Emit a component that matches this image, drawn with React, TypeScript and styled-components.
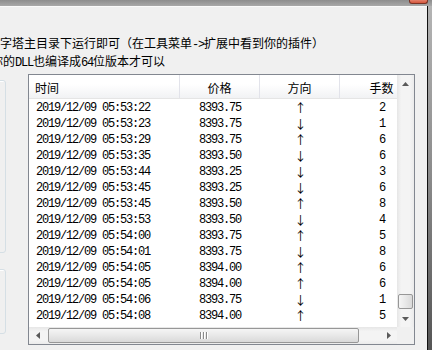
import React from "react";
import styled, { createGlobalStyle } from "styled-components";

const CJK = `"Noto Sans CJK SC", "Noto Sans CJK JP", sans-serif`;
const MONO = `"Liberation Mono", "DejaVu Sans Mono", monospace`;

const GlobalStyle = createGlobalStyle`
  html, body {
    margin: 0;
    padding: 0;
    width: 432px;
    height: 350px;
    overflow: hidden;
    background: #f0f0f0;
  }
`;

const trades = [
  ["2019/12/09 05:53:22", "8393.75", "up", "2"],
  ["2019/12/09 05:53:23", "8393.75", "down", "1"],
  ["2019/12/09 05:53:29", "8393.75", "up", "6"],
  ["2019/12/09 05:53:35", "8393.50", "down", "6"],
  ["2019/12/09 05:53:44", "8393.25", "down", "3"],
  ["2019/12/09 05:53:45", "8393.25", "down", "6"],
  ["2019/12/09 05:53:45", "8393.50", "up", "8"],
  ["2019/12/09 05:53:53", "8393.50", "down", "4"],
  ["2019/12/09 05:54:00", "8393.75", "up", "5"],
  ["2019/12/09 05:54:01", "8393.75", "down", "8"],
  ["2019/12/09 05:54:05", "8394.00", "up", "6"],
  ["2019/12/09 05:54:05", "8394.00", "up", "6"],
  ["2019/12/09 05:54:06", "8393.75", "down", "1"],
  ["2019/12/09 05:54:08", "8394.00", "up", "5"],
];

function App() {
  return (
    <Page>
      <GlobalStyle />
      <TitleStrip>
        <CloseButton />
      </TitleStrip>
      <Body>
        <Client>
          <Notes>
            <NoteLine $indent={0}>
              字塔主目录下运行即可（在工具菜单<Half>-&gt;</Half>扩展中看到你的插件）
            </NoteLine>
            <NoteLine $indent={-9}>
              你的<Half>DLL</Half>也编译成<Half>64</Half>位版本才可以
            </NoteLine>
          </Notes>

          <Lower>
            <GroupColumn>
              <GroupBox $height={173} $width={26} />
              <GroupBox $height={65} $width={25} />
            </GroupColumn>

            <ListView>
              <ListMain>
                <Grid>
                  <HeaderRow>
                    <HeaderCell $align="left">时间</HeaderCell>
                    <HeaderCell $align="center">价格</HeaderCell>
                    <HeaderCell $align="center">方向</HeaderCell>
                    <HeaderCell $align="center">手数</HeaderCell>
                  </HeaderRow>
                  <Rows>
                    {trades.map(([time, price, dir, qty], i) => (
                      <Row key={i}>
                        <Cell $align="left">{time}</Cell>
                        <Cell $align="center">{price}</Cell>
                        <ArrowCell>{dir === "up" ? "↑" : "↓"}</ArrowCell>
                        <Cell $align="center">{qty}</Cell>
                      </Row>
                    ))}
                  </Rows>
                </Grid>

                <VScroll>
                  <ScrollButton>
                    <svg width="7" height="4" viewBox="0 0 7 4">
                      <polygon points="0,4 3.5,0 7,4" fill="#5a5a5a" />
                    </svg>
                  </ScrollButton>
                  <VTrack>
                    <VThumb />
                  </VTrack>
                  <ScrollButton>
                    <svg width="7" height="4" viewBox="0 0 7 4">
                      <polygon points="0,0 7,0 3.5,4" fill="#5a5a5a" />
                    </svg>
                  </ScrollButton>
                </VScroll>
              </ListMain>

              <HScrollRow>
                <HScroll>
                  <ScrollButton>
                    <svg width="4" height="7" viewBox="0 0 4 7">
                      <polygon points="4,0 4,7 0,3.5" fill="#5a5a5a" />
                    </svg>
                  </ScrollButton>
                  <HTrack>
                    <HThumb style={{ width: 311 }}>
                      <Grip>
                        <span />
                        <span />
                        <span />
                      </Grip>
                    </HThumb>
                  </HTrack>
                  <ScrollButton>
                    <svg width="4" height="7" viewBox="0 0 4 7">
                      <polygon points="0,0 4,3.5 0,7" fill="#5a5a5a" />
                    </svg>
                  </ScrollButton>
                </HScroll>
                <Corner />
              </HScrollRow>
            </ListView>
          </Lower>
        </Client>
        <Frame />
      </Body>
    </Page>
  );
}

export default App;

const Page = styled.div`
  width: 432px;
  height: 350px;
  display: flex;
  flex-direction: column;
  overflow: hidden;
  background: #f0f0f0;
`;

const TitleStrip = styled.div`
  height: 6px;
  flex: none;
  display: flex;
  justify-content: flex-end;
  align-items: flex-start;
  padding-right: 4px;
  background: linear-gradient(#8d8d8d, #a8a8a8);
`;

const CloseButton = styled.div`
  width: 19px;
  height: 4px;
  box-sizing: border-box;
  border: 1px solid #7a3224;
  border-top: none;
  border-radius: 0 0 3px 3px;
  background: linear-gradient(#e4806a, #d5563c);
`;

const Body = styled.div`
  flex: 1;
  display: flex;
  min-height: 0;
`;

const Client = styled.div`
  flex: 1;
  display: flex;
  flex-direction: column;
  padding-top: 28px;
  border-top: 1px solid #fafafa;
  box-sizing: border-box;
  background: #f0f0f0;
  overflow: hidden;
`;

const Frame = styled.div`
  width: 4px;
  border-left: 1px solid #111;
  background: linear-gradient(#b4b4b4, #8a8a8a 50%, #555 100%);
`;

const Notes = styled.div`
  font-family: ${CJK};
  font-size: 12px;
  line-height: 15px;
  color: #000;
  white-space: nowrap;
`;

const NoteLine = styled.div<{ $indent: number }>`
  margin-left: ${(p) => p.$indent}px;
`;

const Half = styled.span`
  font-family: ${MONO};
  letter-spacing: -1.2px;
`;

const Lower = styled.div`
  display: flex;
  margin-top: 3px;
  gap: 22px;
`;

const GroupColumn = styled.div`
  width: 6px;
  display: flex;
  flex-direction: column;
  gap: 16px;
  padding-top: 6px;
`;

const GroupBox = styled.div<{ $height: number; $width: number }>`
  height: ${(p) => p.$height}px;
  width: ${(p) => p.$width}px;
  margin-left: ${(p) => 6 - p.$width}px;
  box-sizing: border-box;
  border: 1px solid #d5dfe5;
  border-radius: 3px;
  box-shadow: inset 1px 1px 0 #fff;
`;

const ListView = styled.div`
  width: 387px;
  height: 271px;
  box-sizing: border-box;
  border: 1px solid #828790;
  background: #fff;
  display: flex;
  flex-direction: column;
`;

const ListMain = styled.div`
  flex: 1;
  display: flex;
  min-height: 0;
`;

const Grid = styled.div`
  flex: 1;
  overflow: hidden;
  display: flex;
  flex-direction: column;
`;

const columns = `151px 80px 80px 84px`;

const HeaderRow = styled.div`
  display: grid;
  grid-template-columns: ${columns};
  height: 24px;
  box-sizing: border-box;
  border-bottom: 1px solid #e5e5e5;
  background: linear-gradient(#ffffff 0%, #ffffff 40%, #f1f2f4 100%);
`;

const HeaderCell = styled.div<{ $align: "left" | "center" }>`
  font-family: ${CJK};
  font-size: 12px;
  color: #000;
  display: flex;
  align-items: center;
  justify-content: ${(p) => (p.$align === "left" ? "flex-start" : "center")};
  padding: 2px 0 0 ${(p) => (p.$align === "left" ? "6px" : "0")};
  border-right: 1px solid #e2e3ea;
  white-space: nowrap;
`;

const Rows = styled.div`
  padding-top: 1px;
`;

const Row = styled.div`
  display: grid;
  grid-template-columns: ${columns};
  height: 16px;
`;

const Cell = styled.div<{ $align: "left" | "center" }>`
  font-family: ${MONO};
  font-size: 12px;
  letter-spacing: -1.2px;
  line-height: 16px;
  color: #000;
  text-align: ${(p) => p.$align};
  padding-left: ${(p) => (p.$align === "left" ? "7px" : "0")};
  white-space: nowrap;
`;

const ArrowCell = styled.div`
  font-family: ${CJK};
  font-size: 12px;
  line-height: 16px;
  color: #000;
  text-align: center;
  padding-left: 1px;
`;

const VScroll = styled.div`
  width: 17px;
  display: flex;
  flex-direction: column;
  background: linear-gradient(to right, #e6e6e6, #f4f4f4 25%, #f4f4f4 75%, #ebebeb);
`;

const ScrollButton = styled.div`
  width: 17px;
  height: 17px;
  flex: none;
  display: flex;
  align-items: center;
  justify-content: center;
`;

const VTrack = styled.div`
  flex: 1;
  display: flex;
  flex-direction: column;
  justify-content: flex-end;
  align-items: center;
  padding-bottom: 1px;
`;

const VThumb = styled.div`
  width: 15px;
  height: 15px;
  box-sizing: border-box;
  border: 1px solid #979797;
  border-radius: 2px;
  background: linear-gradient(to right, #f5f5f5, #e8e8e8 50%, #d9d9d9);
`;

const HScrollRow = styled.div`
  height: 17px;
  display: flex;
`;

const HScroll = styled.div`
  flex: 1;
  display: flex;
  background: linear-gradient(#e6e6e6, #f4f4f4 25%, #f4f4f4 75%, #ebebeb);
`;

const HTrack = styled.div`
  flex: 1;
  display: flex;
  align-items: center;
  padding-left: 2px;
`;

const HThumb = styled.div`
  height: 15px;
  box-sizing: border-box;
  border: 1px solid #979797;
  border-radius: 2px;
  background: linear-gradient(#f5f5f5, #e8e8e8 50%, #d9d9d9);
  display: flex;
  align-items: center;
  justify-content: center;
`;

const Grip = styled.div`
  display: flex;
  gap: 2px;

  span {
    width: 1px;
    height: 7px;
    background: #8a8a8a;
    box-shadow: 1px 0 0 #fff;
  }
`;

const Corner = styled.div`
  width: 17px;
  background: #f0f0f0;
`;
